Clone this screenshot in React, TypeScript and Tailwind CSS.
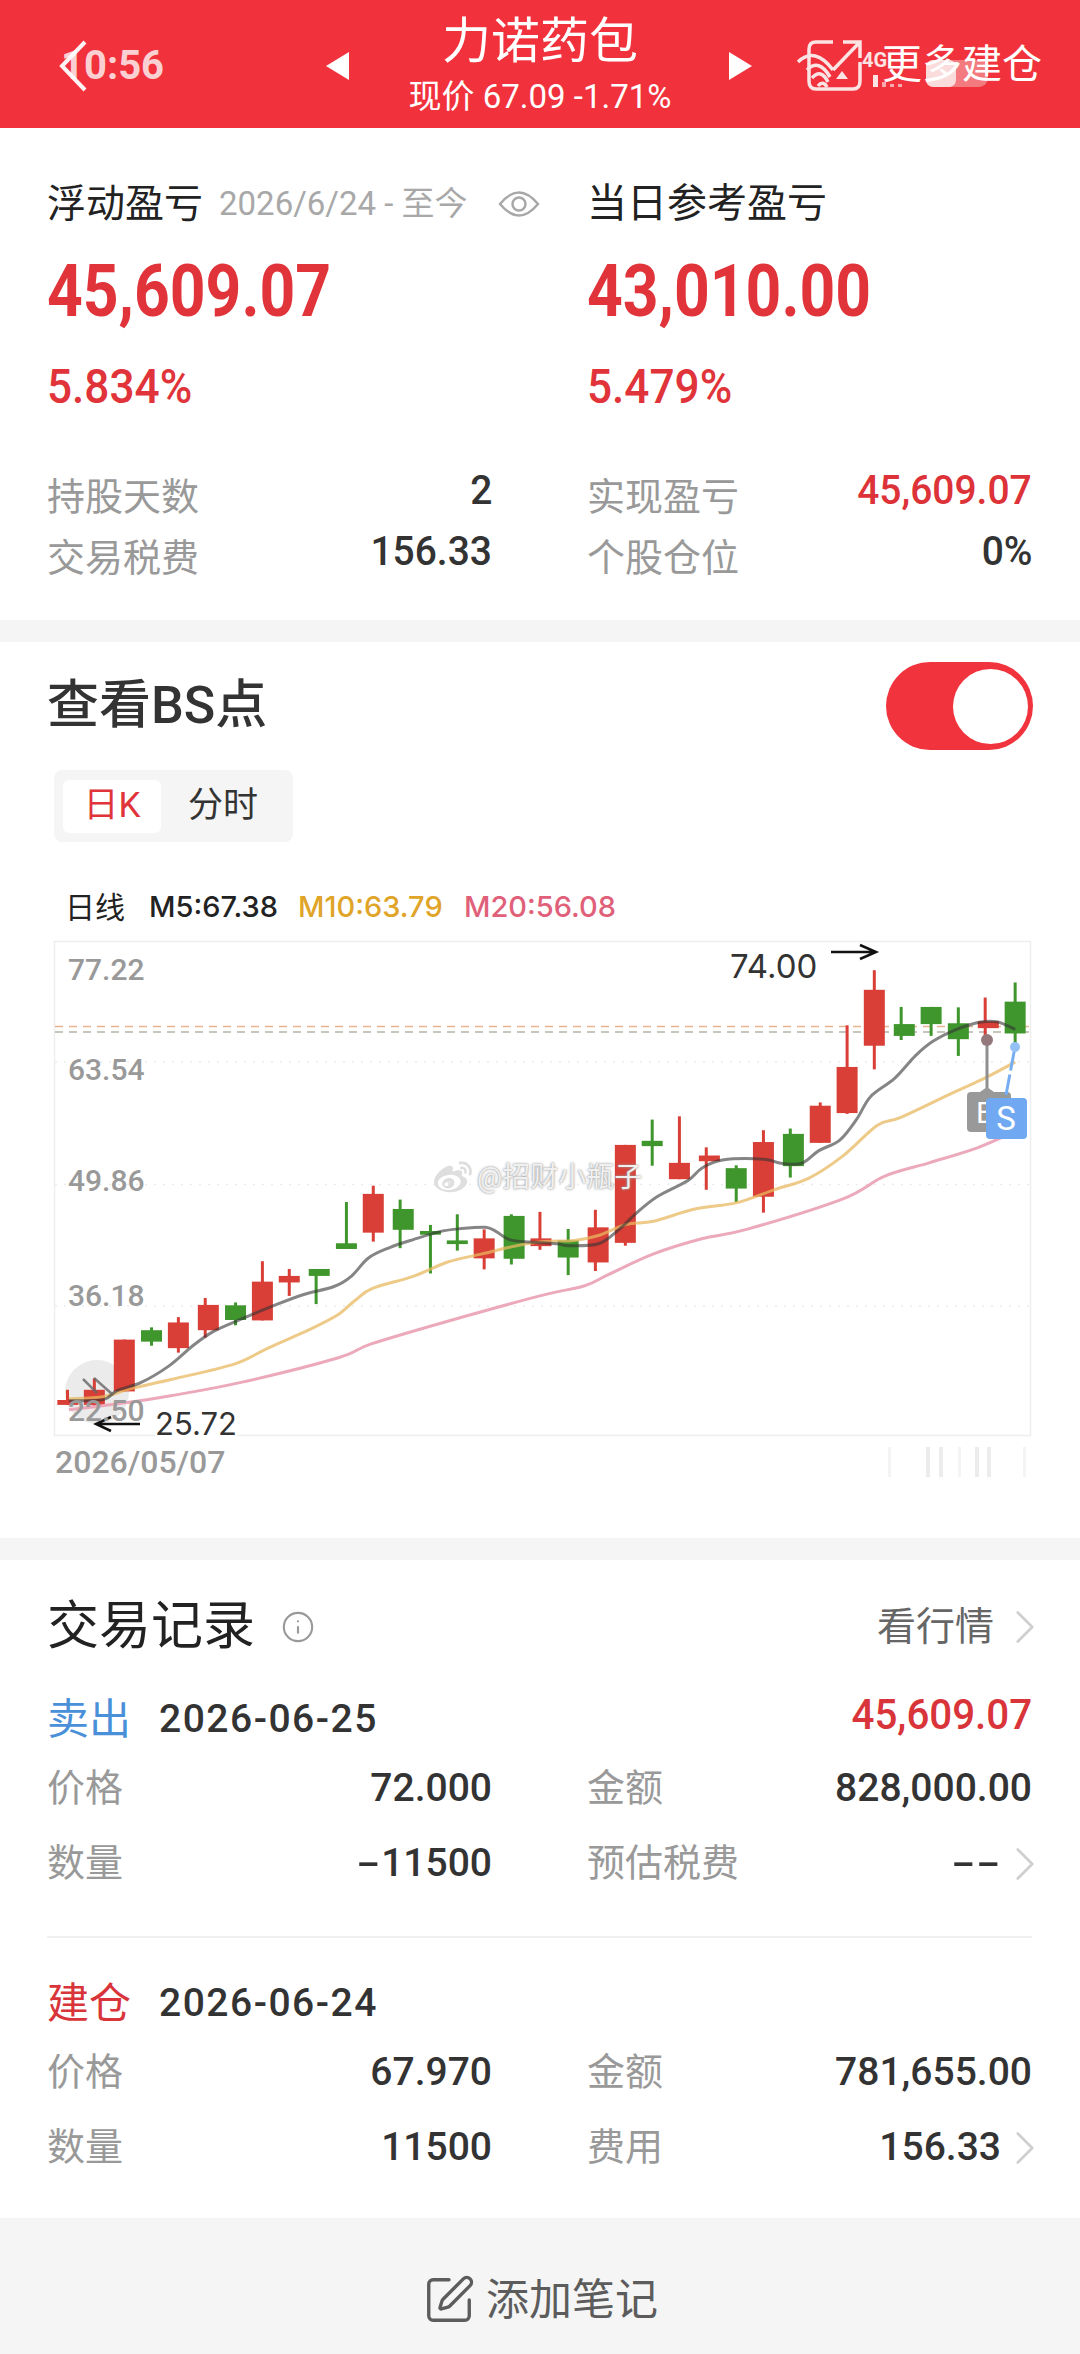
import React from 'react'
import { ChevronRight, SquarePen, Info } from 'lucide-react'
import { FaWeibo } from 'react-icons/fa'

// chart points were read off stretched crops, so map them back to page px
const X = (z: number) => z / 2.904
const Y = (z: number) => 860 + z / 2.45
const OFF = 1568 // second crop starts here

const RED = '#d93f37'
const GREEN = '#3f962d'

// [bodyX, wickX, bodyTop, bodyBottom, wickTop, wickBottom, isRed]
const candles: [number, number, number, number, number, number, boolean][] = [
  [197, 196, 1323, 1335, 1298, 1335, true],
  [274, 274, 1298, 1335, 1270, 1340, true],
  [361, 361, 1175, 1302, 1175, 1302, true],
  [440, 440, 1152, 1180, 1145, 1190, false],
  [518, 518, 1133, 1196, 1120, 1207, true],
  [605, 596, 1090, 1152, 1073, 1170, true],
  [684, 684, 1091, 1127, 1084, 1140, false],
  [762, 762, 1033, 1128, 983, 1128, true],
  [840, 840, 1019, 1035, 1002, 1068, true],
  [927, 918, 1002, 1019, 1002, 1088, false],
  [1006, 1006, 939, 953, 838, 953, false],
  [1084, 1084, 818, 913, 798, 935, true],
  [1171, 1162, 855, 906, 832, 951, false],
  [1250, 1250, 909, 918, 894, 1013, false],
  [1328, 1328, 932, 941, 868, 957, false],
  [1406, 1406, 927, 976, 905, 1003, true],
  [1493, 1485, 872, 977, 868, 991, false],
  [1571, 1568, 927, 946, 862, 955, true],
  [OFF + 82, OFF + 82, 932, 974, 904, 1017, false],
  [OFF + 169, OFF + 161, 900, 986, 857, 1007, true],
  [OFF + 248, OFF + 248, 698, 938, 698, 945, true],
  [OFF + 326, OFF + 326, 688, 701, 636, 749, false],
  [OFF + 405, OFF + 405, 742, 782, 628, 782, true],
  [OFF + 492, OFF + 483, 724, 738, 704, 808, true],
  [OFF + 570, OFF + 570, 755, 805, 748, 838, false],
  [OFF + 649, OFF + 649, 691, 825, 662, 864, true],
  [OFF + 736, OFF + 727, 671, 750, 658, 778, false],
  [OFF + 814, OFF + 814, 602, 693, 594, 693, true],
  [OFF + 892, OFF + 892, 507, 620, 405, 622, true],
  [OFF + 971, OFF + 971, 318, 455, 270, 513, true],
  [OFF + 1058, OFF + 1049, 402, 431, 360, 441, false],
  [OFF + 1136, OFF + 1136, 360, 402, 360, 431, false],
  [OFF + 1215, OFF + 1215, 400, 439, 361, 480, false],
  [OFF + 1302, OFF + 1293, 395, 412, 337, 440, true],
  [OFF + 1380, OFF + 1380, 347, 425, 300, 450, false],
]

const ma5 = [[200,1325],[300,1322],[340,1300],[410,1280],[490,1240],[560,1190],[620,1155],[700,1125],[800,1090],[880,1065],[970,1045],[1020,1020],[1070,975],[1130,950],[1200,930],[1280,910],[1340,903],[1410,900],[1440,910],[1480,930],[1540,936],[1620,940],[1650,945],[1738,940],[1798,905],[1848,865],[1908,825],[1998,785],[2038,755],[2098,735],[2218,733],[2268,743],[2328,743],[2378,712],[2438,687],[2488,635],[2528,580],[2598,535],[2658,480],[2708,445],[2778,415],[2848,397],[2898,397],[2948,415]]
const ma10 = [[200,1320],[300,1315],[380,1295],[500,1272],[680,1235],[780,1195],[900,1150],[980,1115],[1030,1080],[1080,1050],[1200,1020],[1300,985],[1400,965],[1500,945],[1580,935],[1668,932],[1738,920],[1818,893],[1898,885],[2018,855],[2138,840],[2248,808],[2348,780],[2448,725],[2548,650],[2618,630],[2768,570],[2858,535],[2948,495]]
const ma20 = [[200,1347],[380,1328],[500,1312],[700,1280],[980,1220],[1080,1185],[1300,1130],[1568,1068],[1698,1043],[1768,1015],[1898,965],[2038,928],[2168,905],[2448,830],[2568,775],[2698,742],[2838,705],[2948,665]]

// catmull-rom through the read points so the averages don't look kinked
function smooth(list: number[][]) {
  const p = list.map(([x, y]) => [X(x), Y(y)])
  let d = `M${p[0][0].toFixed(1)} ${p[0][1].toFixed(1)}`
  for (let i = 0; i < p.length - 1; i++) {
    const a = p[Math.max(i - 1, 0)]
    const b = p[i]
    const c = p[i + 1]
    const e = p[Math.min(i + 2, p.length - 1)]
    const c1x = b[0] + (c[0] - a[0]) / 6
    const c1y = b[1] + (c[1] - a[1]) / 6
    const c2x = c[0] - (e[0] - b[0]) / 6
    const c2y = c[1] - (e[1] - b[1]) / 6
    d += ` C${c1x.toFixed(1)} ${c1y.toFixed(1)} ${c2x.toFixed(1)} ${c2y.toFixed(1)} ${c[0].toFixed(1)} ${c[1].toFixed(1)}`
  }
  return d
}

function Squeezed({ children, className = '' }: { children: React.ReactNode; className?: string }) {
  return <span className={`inline-block whitespace-nowrap ${className}`}>{children}</span>
}

// the app's number font has a long hyphen
function Dash() {
  return <span className="inline-block w-[25px] scale-x-[1.8] text-center">-</span>
}

function StatRow({ label, value, red }: { label: string; value: string; red?: boolean }) {
  return (
    <div className="flex h-[60px] items-center justify-between">
      <span className="text-[38px] text-[#999999]">{label}</span>
      <Squeezed className={`origin-right scale-x-[0.95] pb-[12px] text-[41px] font-medium ${red ? 'text-[#dc3238]' : 'text-[#333333]'}`}>
        {value}
      </Squeezed>
    </div>
  )
}

function TradeCell({ label, value, chevron }: { label: string; value: React.ReactNode; chevron?: boolean }) {
  return (
    <div className="flex h-[75px] items-center justify-between">
      <span className="text-[38px] text-[#999999]">{label}</span>
      <span className="flex items-center">
        <span className="whitespace-nowrap text-[39px] font-medium text-[#333333]">{value}</span>
        {chevron && <ChevronRight className="-my-[10px] -ml-[5px] -mr-[22px] h-[58px] w-[58px] text-[#cfcfcf]" strokeWidth={1.1} />}
      </span>
    </div>
  )
}

function Trade({ kind, color, date, profit, cells }: { kind: string; color: string; date: string; profit?: string; cells: [string, React.ReactNode, boolean?][] }) {
  return (
    <div>
      <div className="flex h-[64px] items-center justify-between">
        <span className="flex items-center">
          <span className={`text-[42px] ${color}`}>{kind}</span>
          <span className="ml-[28px] text-[39px] font-medium tracking-[1.5px] text-[#333333]">{date}</span>
        </span>
        {profit && (
          <Squeezed className="origin-right scale-x-[0.96] pb-[10px] text-[42px] font-medium text-[#d8343a]">{profit}</Squeezed>
        )}
      </div>
      <div className="grid grid-cols-[445px_445px] gap-x-[95px]">
        {cells.map(([label, value, chevron]) => (
          <TradeCell key={label} label={label} value={value} chevron={chevron} />
        ))}
      </div>
    </div>
  )
}

function HeaderIcons() {
  return (
    <svg className="absolute left-0 top-0 h-[128px] w-[1080px]" viewBox="0 0 1080 128" fill="none">
      {/* back arrow + status bar bleeding through */}
      <path d="M85 42 L62 66 L85 90" stroke="#fff" strokeWidth="4" strokeOpacity="0.95" />
      {/* screen cast box */}
      <path d="M833 42 H816 Q809 42 809 49 V81 Q809 89 816 89 H853 Q860 89 860 81 V62" stroke="#fce3e4" strokeWidth="3.5" />
      <path d="M833 70 L859 43 M843 42 H860 V58" stroke="#fce3e4" strokeWidth="3.5" />
      <path d="M798 62 Q815 46 833 70 M807 70 Q819 58 830 77 M812 78 Q821 68 828 82 M818 86 Q823 80 827 87" stroke="#fce3e4" strokeWidth="3.5" />
      <path d="M842 71 L848 79 H836 Z" fill="#fce3e4" />
      <rect x="873" y="75" width="5" height="12" fill="#fce3e4" />
      <rect x="882" y="82" width="4" height="5" fill="#f8a9ad" />
      <rect x="890" y="84" width="4" height="3" fill="#f8a9ad" />
      <rect x="898" y="84" width="4" height="3" fill="#f8a9ad" />
      <rect x="926" y="60" width="62" height="27" rx="9" fill="#f37a7e" />
      <rect x="926" y="60" width="30" height="27" rx="7" fill="#fbdcdd" />
    </svg>
  )
}

function EyeRing() {
  return (
    <svg className="ml-[30px] h-[30px] w-[42px] shrink-0" viewBox="0 0 42 30" fill="none" stroke="#a8a8a8" strokeWidth="2.5">
      <path d="M2 15 Q21 -8 40 15 Q21 38 2 15 Z" />
      <circle cx="21" cy="15" r="6.5" />
    </svg>
  )
}

function Chart() {
  return (
    <div className="relative h-[560px] w-full">
      <svg className="absolute left-0 top-0 h-[560px] w-[1080px]" viewBox="0 890 1080 560" fill="none">
        <rect x="54.5" y="941.5" width="976" height="494" stroke="#eeeeee" strokeWidth="1.5" />
        {[1062, 1184.5, 1306].map((y) => (
          <line key={y} x1="55" x2="1030" y1={y} y2={y} stroke="#ececec" strokeWidth="1.5" strokeDasharray="2 7" />
        ))}
        <line x1="55" x2="1030" y1="1026.5" y2="1026.5" stroke="#e8b48f" strokeWidth="1.5" strokeDasharray="8 6" />
        <line x1="55" x2="1030" y1="1032" y2="1032" stroke="#b3b3a8" strokeWidth="1.5" strokeDasharray="8 6" />

        <circle cx="97" cy="1392" r="32" fill="#e6e6e6" fillOpacity="0.8" />

        {candles.map(([bx, wx, top, bottom, wickTop, wickBottom, isRed]) => (
          <g key={bx} fill={isRed ? RED : GREEN}>
            <rect x={X(wx) - 1.5} y={Y(wickTop)} width="3" height={Y(wickBottom) - Y(wickTop)} />
            <rect x={X(bx) - 10.5} y={Y(top)} width="21" height={Y(bottom) - Y(top)} />
          </g>
        ))}

        <path d={smooth(ma20)} stroke="#eca9bb" strokeWidth="3" />
        <path d={smooth(ma10)} stroke="#e8b860" strokeOpacity="0.75" strokeWidth="3" />
        <path d={smooth(ma5)} stroke="#333333" strokeOpacity="0.6" strokeWidth="3" />

        <path d="M83 1379 L97 1393 M94 1378 L112 1394" stroke="#666666" strokeOpacity="0.8" strokeWidth="2.5" />

        {/* max / min arrows */}
        <path d="M831 952 H875 M860 945 L876 952 L860 959" stroke="#111111" strokeWidth="2.5" />
        <path d="M140 1424 H97 M111 1417 L96 1424 L111 1431" stroke="#111111" strokeWidth="2.5" />

        {/* B / S markers, S sits on top of B */}
        <line x1="987" x2="987" y1="1040" y2="1090" stroke="#8f8f8f" strokeWidth="3" />
        <circle cx="987" cy="1040" r="6" fill="#94797c" />
        <path d="M980 1092 L987 1087 L994 1092 Z" fill="#999999" />
        <rect x="967" y="1092" width="44" height="40" rx="4" fill="#999999" />
        <text x="976" y="1123" fontSize="30" fill="#ffffff">B</text>
        <line x1="1015" x2="1006" y1="1047" y2="1095" stroke="#77aef2" strokeWidth="3" strokeDasharray="24 4" />
        <circle cx="1015" cy="1047" r="5" fill="#94c1f5" />
        <rect x="986" y="1098" width="41" height="41" rx="4" fill="#70a9f2" />
        <text x="1006" y="1130" fontSize="33" fill="#ffffff" textAnchor="middle">S</text>
      </svg>

      <span className="absolute left-[68px] top-[62px] text-[30px] font-medium leading-9 text-[#999999]">77.22</span>
      <span className="absolute left-[68px] top-[162px] text-[30px] font-medium leading-9 text-[#999999]">63.54</span>
      <span className="absolute left-[68px] top-[273px] text-[30px] font-medium leading-9 text-[#999999]">49.86</span>
      <span className="absolute left-[68px] top-[388px] text-[30px] font-medium leading-9 text-[#999999]">36.18</span>
      <span className="absolute left-[68px] top-[503px] text-[30px] font-medium leading-9 text-[#999999]">22.50</span>

      <span className="absolute left-[730px] top-[56px] font-['Inter'] text-[33px] leading-10 text-[#333333]">74.00</span>
      <span className="absolute left-[155px] top-[518px] bg-white font-['Inter'] text-[31px] leading-8 text-[#333333]">25.72</span>

      {/* watermark */}
      <span className="absolute left-[432px] top-[268px] flex items-center">
        <FaWeibo className="h-[38px] w-[42px] text-[#dedede]" />
        <span className="ml-[3px] text-[28px] leading-10 text-white/85 [text-shadow:0_0_3px_#9a9a9a,0_0_1px_#9a9a9a]">@招财小瓶子</span>
      </span>
    </div>
  )
}

export default function App() {
  return (
    <div className="min-h-[2354px] w-[1080px] bg-[#f5f5f5] font-['Roboto','Noto_Sans_CJK_SC',sans-serif] text-[#333333]">
      <header className="relative flex h-[128px] items-start justify-center overflow-hidden bg-[#f1323c] text-white">
        <span className="absolute left-[61px] top-[46px] text-[40px] font-bold leading-10 text-[#fbd0d3]">10:56</span>
        <HeaderIcons />
        <span className="absolute left-[326px] top-[52px] h-0 w-0 border-y-[14px] border-r-[23px] border-y-transparent border-r-white" />
        <div className="flex flex-col items-center">
          <span className="mt-[14px] text-[49px] leading-[56px]">力诺药包</span>
          <span className="mt-[7px] whitespace-nowrap text-[33px] leading-[40px]">现价 67.09 -1.71%</span>
        </div>
        <span className="absolute left-[729px] top-[52px] h-0 w-0 border-y-[14px] border-l-[23px] border-y-transparent border-l-white" />
        <span className="absolute left-[862px] top-[50px] text-[20px] font-bold leading-5 text-[#fce3e4]">4G</span>
        <span className="absolute right-[38px] top-[40px] text-[40px] leading-[50px]">更多建仓</span>
      </header>

      <section className="bg-white pb-[32px] pl-[47px] pr-[48px] pt-[46px]">
        <div className="grid grid-cols-[445px_445px] gap-x-[95px]">
          <div>
            <div className="flex h-[60px] items-center whitespace-nowrap">
              <span className="shrink-0 text-[39px] text-[#222222]">浮动盈亏</span>
              <span className="ml-[16px] shrink-0 text-[33px] text-[#a8a8a8]">2026/6/24 - 至今</span>
              <EyeRing />
            </div>
            <div className="mt-[17px] h-[80px] text-[73px] font-bold leading-[80px] text-[#e0343a]">
              <Squeezed className="origin-left scale-x-[0.855]">45,609.07</Squeezed>
            </div>
            <div className="mt-[26px] h-[60px] text-[48px] font-medium leading-[60px] text-[#e0343a]">
              <Squeezed className="origin-left scale-x-[0.92]">5.834%</Squeezed>
            </div>
          </div>
          <div>
            <div className="flex h-[60px] items-center">
              <span className="text-[40px] text-[#222222]">当日参考盈亏</span>
            </div>
            <div className="mt-[17px] h-[80px] text-[73px] font-bold leading-[80px] text-[#e0343a]">
              <Squeezed className="origin-left scale-x-[0.855]">43,010.00</Squeezed>
            </div>
            <div className="mt-[26px] h-[60px] text-[48px] font-medium leading-[60px] text-[#e0343a]">
              <Squeezed className="origin-left scale-x-[0.92]">5.479%</Squeezed>
            </div>
          </div>
        </div>
        <div className="mt-[50px] grid grid-cols-[445px_445px] gap-x-[95px] gap-y-[1px]">
          <StatRow label="持股天数" value="2" />
          <StatRow label="实现盈亏" value="45,609.07" red />
          <StatRow label="交易税费" value="156.33" />
          <StatRow label="个股仓位" value="0%" />
        </div>
      </section>

      <section className="mt-[22px] h-[896px] bg-white">
        <div className="flex items-center justify-between pl-[47px] pr-[47px] pt-[20px]">
          <span className="text-[52px] font-medium text-[#333333]">查看BS点</span>
          <span className="flex h-[88px] w-[147px] items-center justify-end rounded-full bg-[#f0333c] pr-[5px]">
            <span className="h-[75px] w-[75px] rounded-full bg-white" />
          </span>
        </div>
        <div className="ml-[54px] mt-[20px] flex h-[72px] w-[239px] items-center rounded-[8px] bg-[#f5f5f5] pl-[9px]">
          <span className="flex h-[53px] w-[98px] items-center justify-center rounded-[6px] bg-white text-[35px] text-[#e0343a]">日K</span>
          <span className="ml-[27px] text-[35px] text-[#333333]">分时</span>
        </div>
        <div className="ml-[65px] mt-[41px] flex h-[48px] items-center whitespace-nowrap font-['Inter','Noto_Sans_CJK_SC',sans-serif] text-[29px] font-medium">
          <span className="w-[84px] text-[30px] font-normal text-[#222222]">日线</span>
          <span className="w-[149px] text-[#222222]">M5:67.38</span>
          <span className="w-[166px] text-[#e0a428]">M10:63.79</span>
          <span className="text-[#e0607a]">M20:56.08</span>
        </div>
        <div className="-mt-[41px]">
          <Chart />
        </div>
        <div className="-mt-[8px] flex items-center justify-between pl-[55px] pr-[54px]">
          <span className="text-[32px] font-medium leading-10 text-[#999999]">2026/05/07</span>
          <span className="flex h-[30px] items-center">
            <span className="h-full w-[3px] bg-[#f4f4f4]" />
            <span className="ml-[35px] h-full w-[4px] bg-[#ececec]" />
            <span className="ml-[9px] h-full w-[4px] bg-[#ececec]" />
            <span className="ml-[15px] h-full w-[3px] bg-[#f4f4f4]" />
            <span className="ml-[14px] h-full w-[4px] bg-[#ececec]" />
            <span className="ml-[8px] h-full w-[4px] bg-[#ececec]" />
            <span className="ml-[32px] h-full w-[3px] bg-[#f4f4f4]" />
          </span>
        </div>
      </section>

      <section className="mt-[22px] h-[658px] bg-white pl-[47px] pr-[48px] pt-[37px]">
        <div className="flex h-[60px] items-center justify-between">
          <span className="flex items-center">
            <span className="text-[52px] text-[#222222]">交易记录</span>
            <Info className="ml-[26px] h-[34px] w-[34px] text-[#999999]" strokeWidth={1.5} />
          </span>
          <span className="flex items-center text-[39px] text-[#666666]">
            看行情
            <ChevronRight className="-my-[10px] ml-[2px] -mr-[22px] h-[58px] w-[58px] text-[#cfcfcf]" strokeWidth={1.1} />
          </span>
        </div>
        <div className="mt-[30px]">
          <Trade
            kind="卖出"
            color="text-[#4a90d9]"
            date="2026-06-25"
            profit="45,609.07"
            cells={[
              ['价格', '72.000'],
              ['金额', '828,000.00'],
              ['数量', <><Dash />11500</>],
              ['预估税费', <><Dash /><Dash /></>, true],
            ]}
          />
        </div>
        <div className="mt-[35px] h-[2px] bg-[#f0f0f0]" />
        <div className="mt-[33px]">
          <Trade
            kind="建仓"
            color="text-[#d8343a]"
            date="2026-06-24"
            cells={[['价格', '67.970'], ['金额', '781,655.00'], ['数量', '11500'], ['费用', '156.33', true]]}
          />
        </div>
      </section>

      <footer className="flex h-[136px] items-center justify-center pt-[28px] text-[#5c5c5c]">
        <SquarePen className="h-[54px] w-[54px]" strokeWidth={1.5} />
        <span className="ml-[10px] text-[43px]">添加笔记</span>
      </footer>
    </div>
  )
}
